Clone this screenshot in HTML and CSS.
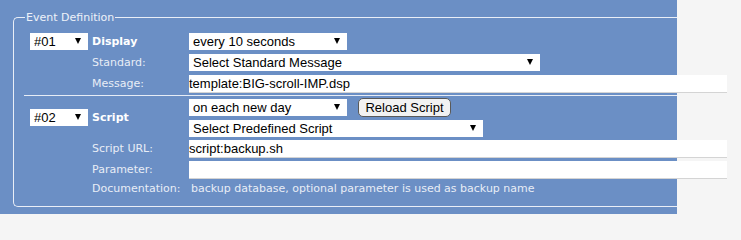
FILE: index.html
```html
<!DOCTYPE html>
<html>
<head>
<meta charset="utf-8">
<link rel="stylesheet" href="styles.css">
</head>
<body>
<div class="panel">
  <fieldset class="events">
    <legend>Event Definition</legend>
    <div class="event first">
      <span class="sel num"><select><option>#01</option></select></span>
      <span class="type">Display</span>
      <div class="val"><span class="sel w158"><select><option>every 10 seconds</option></select></span></div>
      <span class="lbl">Standard:</span>
      <div class="val"><span class="sel w351"><select><option>Select Standard Message</option></select></span></div>
      <span class="lbl">Message:</span>
      <input class="txt" type="text" value="template:BIG-scroll-IMP.dsp">
    </div>
    <div class="event second">
      <span class="sel num"><select><option>#02</option></select></span>
      <span class="type">Script</span>
      <div class="val stack">
        <div class="line">
          <span class="sel w158"><select><option>on each new day</option></select></span>
          <button class="btn" type="button">Reload Script</button>
        </div>
        <span class="sel w294"><select><option>Select Predefined Script</option></select></span>
      </div>
      <span class="lbl">Script URL:</span>
      <input class="txt" type="text" value="script:backup.sh">
      <span class="lbl">Parameter:</span>
      <input class="txt" type="text" value="">
      <span class="lbl doc">Documentation:</span>
      <span class="docval">backup database, optional parameter is used as backup name</span>
    </div>
  </fieldset>
</div>
</body>
</html>
```
FILE: styles.css
```css
html, body {
  margin: 0;
  padding: 0;
  background: #f5f5f5;
}
body {
  font-family: "DejaVu Sans", sans-serif;
  font-size: 11px;
}
.panel {
  width: 677px;
  height: 214px;
  box-sizing: border-box;
  background: #6b8fc5;
  padding: 11px 0 0 13px;
}
.events {
  box-sizing: border-box;
  width: 664px;
  margin: 0;
  padding: 9px 0 10px 10px;
  border: 1px solid #e9eef7;
  border-right: none;
  border-radius: 5px 0 0 5px;
  min-width: 0;
}
.events legend {
  margin-left: 1px;
  padding: 0 1px;
  color: #eef2f9;
  font-size: 11px;
  line-height: 13px;
}
.event {
  display: grid;
  grid-template-columns: 62px 97px 1fr;
  align-items: center;
  padding-left: 6px;
}
.event.first {
  row-gap: 4px;
  padding-bottom: 2px;
}
.event.second {
  row-gap: 3px;
  padding-top: 2px;
  border-top: 1px solid #e6ecf6;
}
.num {
  grid-column: 1;
}
.type {
  grid-column: 2;
  color: #ffffff;
  font-weight: bold;
  font-size: 11px;
}
.lbl {
  grid-column: 2;
  color: #e8edf6;
  line-height: 14px;
}
.val, .txt, .docval {
  grid-column: 3;
}
.stack {
  display: flex;
  flex-direction: column;
  gap: 3px;
}
.line {
  display: flex;
  align-items: center;
}
.sel {
  position: relative;
  display: block;
  height: 17px;
  background: #ffffff;
}
.sel select {
  appearance: none;
  -webkit-appearance: none;
  display: block;
  width: 100%;
  height: 17px;
  margin: 0;
  border: none;
  border-radius: 0;
  padding: 0 0 0 4px;
  background: transparent;
  font-family: "Liberation Sans", Arial, sans-serif;
  font-size: 13px;
  color: #000;
  outline: none;
}
.sel::after {
  content: "";
  position: absolute;
  right: 7px;
  top: 5px;
  width: 0;
  height: 0;
  border-left: 3px solid transparent;
  border-right: 3px solid transparent;
  border-top: 6px solid #000;
  pointer-events: none;
}
.num {
  width: 58px;
}
.w158 { width: 158px; }
.w351 { width: 351px; }
.w294 { width: 294px; }
.txt {
  box-sizing: border-box;
  width: 538px;
  height: 18px;
  margin: 0;
  padding: 0;
  border: none;
  border-bottom: 1px solid #d4d4d4;
  background: #ffffff;
  font-family: "Liberation Sans", Arial, sans-serif;
  font-size: 13px;
  color: #000;
  outline: none;
}
.btn {
  box-sizing: border-box;
  height: 19px;
  width: 93px;
  margin: 0 0 0 11px;
  padding: 0;
  border: 1px solid #5a5a5a;
  border-radius: 5px;
  background: #f2f2f2;
  font-family: "Liberation Sans", Arial, sans-serif;
  font-size: 13px;
  line-height: 16px;
  color: #000;
}
.docval {
  padding-left: 2px;
  color: #e8edf6;
  line-height: 14px;
}
```
